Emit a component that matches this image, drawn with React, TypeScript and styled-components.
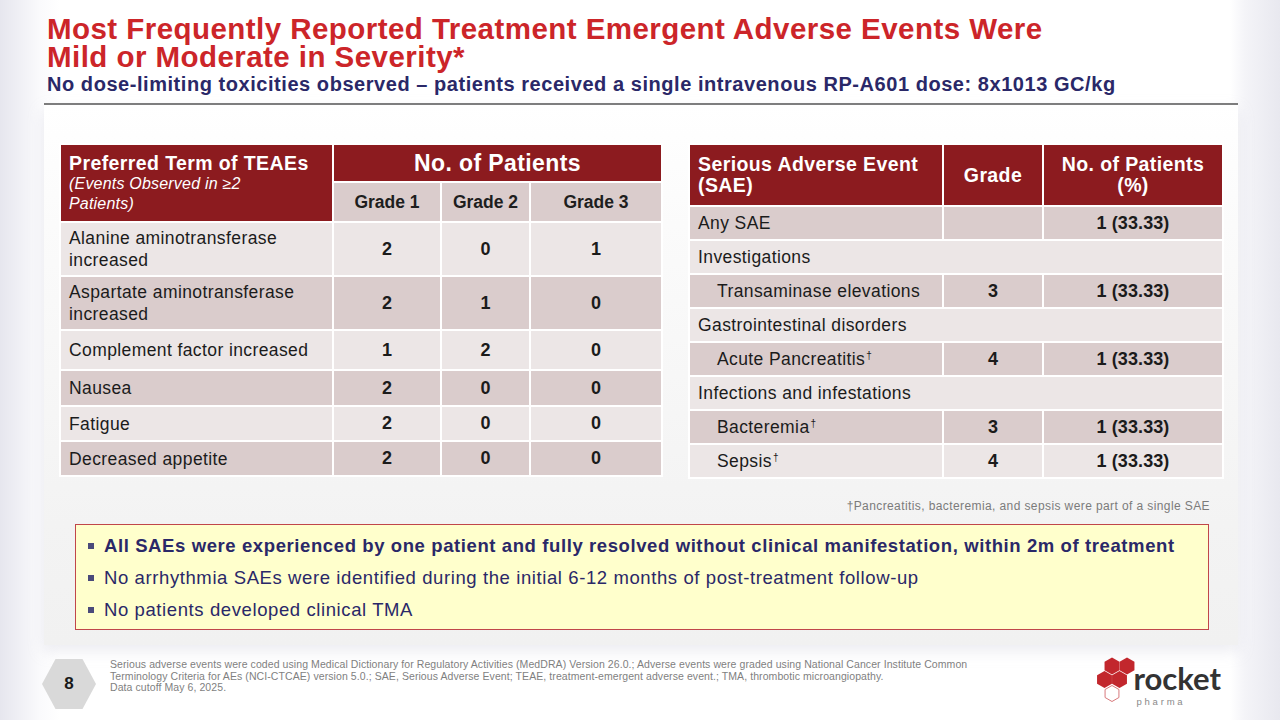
import React from "react";
import styled, { createGlobalStyle } from "styled-components";

const GlobalStyle = createGlobalStyle`
  html, body { margin: 0; padding: 0; background: #fff; }
  body { font-family: "Liberation Sans", Arial, sans-serif; }
`;

const RED = "#8c1b1f";
const DARK_ROW = "#dacccc";
const LIGHT_ROW = "#ece6e6";
const NAVY = "#2a2868";

const Slide = styled.div`
  width: 1280px;
  height: 720px;
  overflow: hidden;
  display: flex;
  flex-direction: column;
  background: linear-gradient(90deg, #e6e6ee 0, #fafafc 40px, #fff 60px, #fff 1230px, #f4f4f8 1245px, #e8e8ef 1280px);
`;

const Header = styled.div`
  padding: 15px 0 0 47px;
`;

const Title = styled.h1`
  margin: 0;
  font-size: 29.5px;
  line-height: 27.5px;
  font-weight: bold;
  color: #cc2529;
  letter-spacing: 0.45px;
`;

const Subtitle = styled.h2`
  margin: 3px 0 0;
  font-size: 20px;
  line-height: 22px;
  font-weight: bold;
  color: ${NAVY};
  letter-spacing: 0.55px;
`;

const Rule = styled.div`
  margin: 8px 0 0 44px;
  width: 1194px;
  height: 2px;
  background: #7a7a7a;
`;

const Panel = styled.div`
  margin-left: 44px;
  width: 1194px;
  height: 540px;
  box-sizing: border-box;
  padding-top: 38px;
  background: linear-gradient(180deg, #ffffff 0, #fbfbfb 120px, #f3f3f3 420px, #f1f1f1 100%);
  box-shadow: 0 6px 14px rgba(200, 200, 215, 0.35);
  display: flex;
  flex-direction: column;
`;

const TablesRow = styled.div`
  display: flex;
  gap: 25px;
  padding: 0 18px 0 15px;
  align-items: flex-start;
`;

const Table = styled.table<{ $width: number }>`
  width: ${(p) => p.$width}px;
  border-collapse: collapse;
  table-layout: fixed;
  font-size: 17.5px;
  color: #1b1b1b;
  letter-spacing: 0.4px;
`;

const Row = styled.tr<{ $h: number; $dark?: boolean }>`
  height: ${(p) => p.$h}px;
  background: ${(p) => (p.$dark ? DARK_ROW : LIGHT_ROW)};
`;

const HeadCell = styled.th<{ $align?: string; $size?: number }>`
  background: ${RED};
  color: #fff;
  font-size: ${(p) => p.$size ?? 19.5}px;
  font-weight: bold;
  line-height: 21px;
  text-align: ${(p) => p.$align ?? "center"};
  vertical-align: middle;
  padding: 0 8px;
  border: 2px solid #fff;
  letter-spacing: 0.4px;
`;

const SubNote = styled.span`
  display: block;
  font-weight: normal;
  font-style: italic;
  font-size: 16px;
  line-height: 20px;
  letter-spacing: 0.2px;
`;

const GradeCell = styled.th`
  background: ${DARK_ROW};
  color: #1e1e1e;
  font-size: 17.5px;
  font-weight: bold;
  text-align: center;
  border: 2px solid #fff;
  letter-spacing: 0;
`;

const Cell = styled.td<{ $indent?: boolean }>`
  padding: 0 6px 0 ${(p) => (p.$indent ? 27 : 8)}px;
  line-height: 22px;
  vertical-align: middle;
  border: 2px solid #fff;
  white-space: nowrap;
`;

const NumCell = styled.td`
  text-align: center;
  font-weight: bold;
  font-size: 18px;
  vertical-align: middle;
  border: 2px solid #fff;
  letter-spacing: 0.1px;
`;

const Dagger = styled.sup`
  font-size: 10px;
  vertical-align: 6px;
  line-height: 0;
  margin-left: 1px;
`;

const Footnote = styled.div`
  margin-top: 20px;
  padding-right: 28px;
  text-align: right;
  font-size: 12px;
  line-height: 14px;
  color: #7b7b7b;
  letter-spacing: 0.4px;
`;

const Callout = styled.ul`
  margin: 11px 0 0 31px;
  width: 1134px;
  height: 106px;
  box-sizing: border-box;
  padding: 5px 0 0 12px;
  list-style: none;
  background: #ffffcc;
  border: 1px solid #c0464a;
`;

const Bullet = styled.li<{ $bold?: boolean }>`
  display: flex;
  align-items: center;
  height: 32px;
  font-size: 18.5px;
  color: ${NAVY};
  font-weight: ${(p) => (p.$bold ? "bold" : "normal")};
  letter-spacing: 0.6px;
  white-space: nowrap;
  &::before {
    content: "";
    width: 6px;
    height: 6px;
    background: #4a4a7a;
    margin-right: 10px;
    flex: none;
  }
`;

const Footer = styled.div`
  display: flex;
  align-items: flex-start;
  padding: 14px 0 0 42px;
`;

const PageHex = styled.div`
  width: 54px;
  height: 50px;
  flex: none;
  background: #d9d9d9;
  clip-path: polygon(25% 0, 75% 0, 100% 50%, 75% 100%, 25% 100%, 0 50%);
  display: flex;
  align-items: center;
  justify-content: center;
  font-size: 17px;
  font-weight: bold;
  color: #1a1a1a;
`;

const Refs = styled.div`
  margin: 0 0 0 14px;
  font-size: 10.5px;
  line-height: 11.5px;
  color: #7f7f7f;
  white-space: nowrap;
  letter-spacing: 0.08px;
`;

const Logo = styled.div`
  margin-left: auto;
  margin-right: 59px;
  margin-top: -3px;
  display: flex;
  align-items: flex-start;
`;

const LogoWords = styled.div`
  display: flex;
  flex-direction: column;
  margin-left: -6px;
  margin-top: 9px;
`;

const Wordmark = styled.span`
  font-family: Lato, "Liberation Sans", sans-serif;
  font-weight: 700;
  font-size: 31px;
  line-height: 27px;
  color: #333;
`;

const Pharma = styled.span`
  font-size: 9.5px;
  line-height: 11px;
  color: #8a8a8a;
  letter-spacing: 2.8px;
  margin: 4px 0 0 3px;
`;

const hex = (cx: number, cy: number, r: number) => {
  const pts: string[] = [];
  for (let i = 0; i < 6; i++) {
    const a = (Math.PI / 3) * i - Math.PI / 2;
    pts.push(`${(cx + r * Math.cos(a)).toFixed(2)},${(cy + r * Math.sin(a)).toFixed(2)}`);
  }
  return pts.join(" ");
};

const RocketMark = () => (
  <svg width="44" height="52" viewBox="0 0 44 52">
    <polygon points={hex(17, 10, 8.6)} fill="#c2272d" />
    <polygon points={hex(32, 10, 8.6)} fill="#c2272d" />
    <polygon points={hex(9.5, 23.5, 8.6)} fill="#c2272d" />
    <polygon points={hex(24.5, 23.5, 8.6)} fill="#c2272d" />
    <polygon points={hex(17, 37.5, 8)} fill="none" stroke="#d8797c" strokeWidth="1" />
  </svg>
);

const teaes: { term: React.ReactNode; g: [number, number, number]; h: number }[] = [
  { term: <>Alanine aminotransferase<br />increased</>, g: [2, 0, 1], h: 54 },
  { term: <>Aspartate aminotransferase<br />increased</>, g: [2, 1, 0], h: 54 },
  { term: "Complement factor increased", g: [1, 2, 0], h: 40 },
  { term: "Nausea", g: [2, 0, 0], h: 36 },
  { term: "Fatigue", g: [2, 0, 0], h: 35 },
  { term: "Decreased appetite", g: [2, 0, 0], h: 35 },
];

type SaeRow = { label: string; dagger?: boolean; indent?: boolean; grade?: string; n?: string; group?: boolean };

const saes: SaeRow[] = [
  { label: "Any SAE", grade: "", n: "1 (33.33)" },
  { label: "Investigations", group: true },
  { label: "Transaminase elevations", indent: true, grade: "3", n: "1 (33.33)" },
  { label: "Gastrointestinal disorders", group: true },
  { label: "Acute Pancreatitis", dagger: true, indent: true, grade: "4", n: "1 (33.33)" },
  { label: "Infections and infestations", group: true },
  { label: "Bacteremia", dagger: true, indent: true, grade: "3", n: "1 (33.33)" },
  { label: "Sepsis", dagger: true, indent: true, grade: "4", n: "1 (33.33)" },
];

export default function App() {
  return (
    <>
      <GlobalStyle />
      <Slide>
        <Header>
          <Title>
            Most Frequently Reported Treatment Emergent Adverse Events Were
            <br />
            Mild or Moderate in Severity*
          </Title>
          <Subtitle>
            No dose-limiting toxicities observed – patients received a single intravenous RP-A601 dose: 8x1013 GC/kg
          </Subtitle>
        </Header>
        <Rule />
        <Panel>
          <TablesRow>
            <Table $width={602}>
              <colgroup>
                <col style={{ width: 273 }} />
                <col style={{ width: 108 }} />
                <col style={{ width: 89 }} />
                <col style={{ width: 132 }} />
              </colgroup>
              <thead>
                <tr style={{ height: 38 }}>
                  <HeadCell rowSpan={2} $align="left">
                    Preferred Term of TEAEs
                    <SubNote>
                      (Events Observed in ≥2
                      <br />
                      Patients)
                    </SubNote>
                  </HeadCell>
                  <HeadCell colSpan={3} $size={23}>
                    No. of Patients
                  </HeadCell>
                </tr>
                <tr style={{ height: 40 }}>
                  <GradeCell>Grade 1</GradeCell>
                  <GradeCell>Grade 2</GradeCell>
                  <GradeCell>Grade 3</GradeCell>
                </tr>
              </thead>
              <tbody>
                {teaes.map((r, i) => (
                  <Row key={i} $h={r.h} $dark={i % 2 === 1}>
                    <Cell>{r.term}</Cell>
                    {r.g.map((v, j) => (
                      <NumCell key={j}>{v}</NumCell>
                    ))}
                  </Row>
                ))}
              </tbody>
            </Table>
            <Table $width={534}>
              <colgroup>
                <col style={{ width: 254 }} />
                <col style={{ width: 100 }} />
                <col style={{ width: 180 }} />
              </colgroup>
              <thead>
                <tr style={{ height: 62 }}>
                  <HeadCell $align="left">
                    Serious Adverse Event
                    <br />
                    (SAE)
                  </HeadCell>
                  <HeadCell>Grade</HeadCell>
                  <HeadCell>
                    No. of Patients
                    <br />
                    (%)
                  </HeadCell>
                </tr>
              </thead>
              <tbody>
                {saes.map((r, i) => (
                  <Row key={i} $h={34} $dark={i % 2 === 0}>
                    {r.group ? (
                      <Cell colSpan={3}>{r.label}</Cell>
                    ) : (
                      <>
                        <Cell $indent={r.indent}>
                          {r.label}
                          {r.dagger && <Dagger>†</Dagger>}
                        </Cell>
                        <NumCell>{r.grade}</NumCell>
                        <NumCell>{r.n}</NumCell>
                      </>
                    )}
                  </Row>
                ))}
              </tbody>
            </Table>
          </TablesRow>
          <Footnote>†Pancreatitis, bacteremia, and sepsis were part of a single SAE</Footnote>
          <Callout>
            <Bullet $bold>
              All SAEs were experienced by one patient and fully resolved without clinical manifestation, within 2m of treatment
            </Bullet>
            <Bullet>No arrhythmia SAEs were identified during the initial 6-12 months of post-treatment follow-up</Bullet>
            <Bullet>No patients developed clinical TMA</Bullet>
          </Callout>
        </Panel>
        <Footer>
          <PageHex>8</PageHex>
          <Refs>
            Serious adverse events were coded using Medical Dictionary for Regulatory Activities (MedDRA) Version 26.0.; Adverse events were graded using National Cancer Institute Common
            <br />
            Terminology Criteria for AEs (NCI-CTCAE) version 5.0.; SAE, Serious Adverse Event; TEAE, treatment-emergent adverse event.; TMA, thrombotic microangiopathy.
            <br />
            Data cutoff May 6, 2025.
          </Refs>
          <Logo>
            <RocketMark />
            <LogoWords>
              <Wordmark>rocket</Wordmark>
              <Pharma>pharma</Pharma>
            </LogoWords>
          </Logo>
        </Footer>
      </Slide>
    </>
  );
}
